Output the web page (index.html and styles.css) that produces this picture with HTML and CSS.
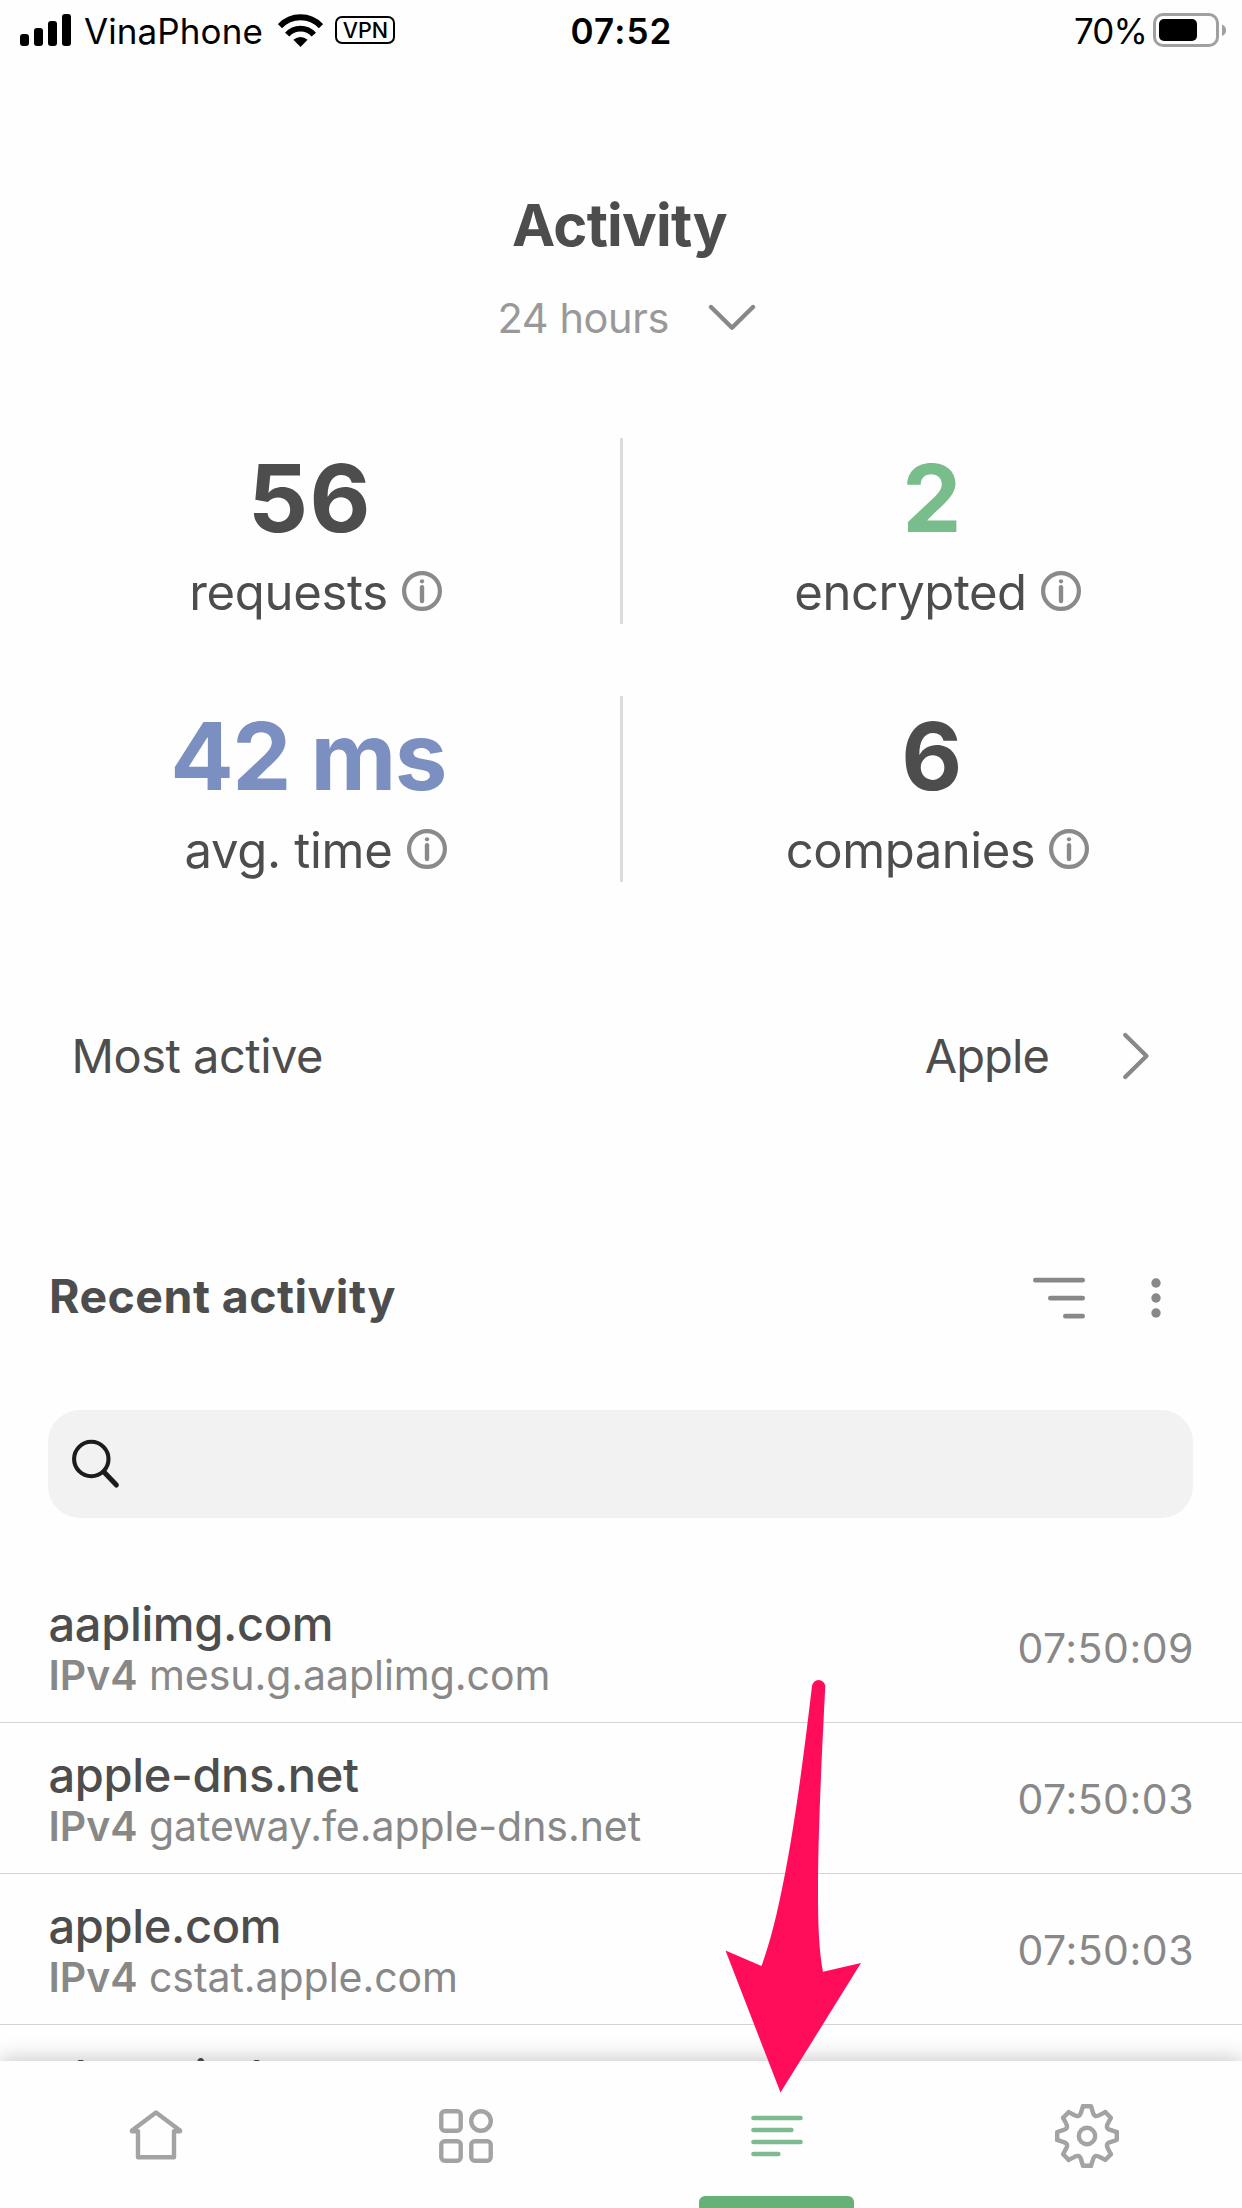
FILE: index.html
```html
<!DOCTYPE html>
<html lang="en">
<head>
<meta charset="utf-8">
<title>Activity</title>
<link rel="stylesheet" href="styles.css">
</head>
<body>
<svg class="defs" width="0" height="0" aria-hidden="true">
  <symbol id="info" viewBox="0 0 40 40">
    <circle cx="20" cy="20" r="17.9" fill="none" stroke="currentColor" stroke-width="4.2"/>
    <circle cx="20" cy="10.3" r="2.1" fill="currentColor"/>
    <path d="M20 16.2V30" stroke="currentColor" stroke-width="4.4" stroke-linecap="round"/>
  </symbol>
  <path id="tooth" d="M-4-29.8H4L5.8-24C6.8-19.8 8.9-18.9 12.9-21.1L18.3-23.9"/>
</svg>
<div class="screen">
  <header class="status">
    <div class="status-left">
      <svg class="signal" width="51" height="32" viewBox="0 0 51 32"><rect y="20" width="9" height="12" rx="3"/><rect x="14" y="14" width="9" height="18" rx="3"/><rect x="28" y="7" width="9" height="25" rx="3"/><rect x="42" width="9" height="32" rx="3"/></svg>
      <span class="carrier">VinaPhone</span>
      <svg class="wifi" width="45" height="33" viewBox="0 0 45 33"><path d="M2 12.2A28 28 0 0 1 43 12.2M9.2 20.6A17.6 17.6 0 0 1 35.8 20.6" fill="none" stroke="#000" stroke-width="5.8"/><path d="M15.4 25.8Q22.5 20 29.6 25.8L22.5 33Z"/></svg>
      <span class="vpn">VPN</span>
    </div>
    <div class="clock">07:52</div>
    <div class="status-right">
      <span class="percent">70%</span>
      <svg class="battery" width="74" height="34" viewBox="0 0 74 34"><rect x="1.5" y="1.5" width="63" height="31" rx="8.5" fill="none" stroke="#a0a0a0" stroke-width="3"/><rect x="6" y="6" width="38" height="22" rx="5"/><path d="M69 11.5Q73 13 73 17.2T69 23Z" fill="#a0a0a0"/></svg>
    </div>
  </header>

  <main class="content">
    <h1>Activity</h1>
    <div class="range"><span>24 hours</span>
      <svg width="48" height="28" viewBox="0 0 48 28"><path d="M3 3L24 23.7L45 3" fill="none" stroke="#888" stroke-width="4.4" stroke-linecap="round" stroke-linejoin="round"/></svg>
    </div>

    <section class="stats">
      <div class="stat"><div class="value tight">56</div><div class="label"><span>requests</span><svg class="info"><use href="#info"/></svg></div></div>
      <div class="divider"></div>
      <div class="stat"><div class="value green">2</div><div class="label wide"><span>encrypted</span><svg class="info"><use href="#info"/></svg></div></div>
      <div class="stat"><div class="value blue">42 ms</div><div class="label"><span>avg. time</span><svg class="info"><use href="#info"/></svg></div></div>
      <div class="divider"></div>
      <div class="stat"><div class="value">6</div><div class="label wide"><span>companies</span><svg class="info"><use href="#info"/></svg></div></div>
    </section>

    <div class="most">
      <span class="most-label">Most active</span><span class="most-value">Apple</span>
      <svg width="28" height="48" viewBox="0 0 28 48"><path d="M3.2 3L24.5 24L3.2 45" fill="none" stroke="#888" stroke-width="4.2" stroke-linecap="round" stroke-linejoin="round"/></svg>
    </div>

    <div class="recent">
      <h2>Recent activity</h2>
      <svg class="sort" width="52" height="42" viewBox="0 0 52 42"><path d="M2.4 3.2H49.6M17.4 21.2H49.6M32.4 39.2H49.6" stroke="#888" stroke-width="4.8" stroke-linecap="round"/></svg>
      <svg class="more" width="10" height="40" viewBox="0 0 10 40" fill="#888"><circle cx="5" cy="5" r="4.7"/><circle cx="5" cy="20" r="4.7"/><circle cx="5" cy="35" r="4.7"/></svg>
    </div>

    <div class="search">
      <svg width="50" height="52" viewBox="0 0 50 52"><circle cx="20.3" cy="22" r="17.2" fill="none" stroke="#1c1c1c" stroke-width="4.1"/><path d="M33 35L45.4 48" stroke="#1c1c1c" stroke-width="5" stroke-linecap="round"/></svg>
    </div>

    <ul class="list">
      <li><div><div class="domain">aaplimg.com</div><div class="host"><b>IPv4</b> <span>mesu.g.aaplimg.com</span></div></div><time>07:50:09</time></li>
      <li><div><div class="domain">apple-dns.net</div><div class="host"><b>IPv4</b> <span>gateway.fe.apple-dns.net</span></div></div><time>07:50:03</time></li>
      <li><div><div class="domain">apple.com</div><div class="host"><b>IPv4</b> <span>cstat.apple.com</span></div></div><time>07:50:03</time></li>
      <li><div><div class="domain">akamaiedge.net</div></div></li>
    </ul>
  </main>

  <nav class="tabs">
    <a class="tab nudge"><svg width="64" height="64" viewBox="-32 -32 64 64"><path d="M0-23.4L24-5.5V-4.8H18V21.2H-18V-4.8H-24V-5.5Z"/></svg></a>
    <a class="tab"><svg width="64" height="64" viewBox="-32 -32 64 64"><rect x="-24.7" y="-24.7" width="19.4" height="19.4" rx="3.5"/><circle cx="15" cy="-15" r="9.8"/><rect x="-24.7" y="5.3" width="19.4" height="19.4" rx="3.5"/><rect x="5.3" y="5.3" width="19.4" height="19.4" rx="3.5"/></svg></a>
    <a class="tab nudge active"><svg width="64" height="64" viewBox="-32 -32 64 64"><path d="M-23.6-18H23.6M-23.6-6H14.4M-23.6 6H23.6M-23.6 18H1.4"/></svg></a>
    <a class="tab"><svg width="68" height="68" viewBox="-34 -34 68 68"><use href="#tooth"/><use href="#tooth" transform="rotate(45)"/><use href="#tooth" transform="rotate(90)"/><use href="#tooth" transform="rotate(135)"/><use href="#tooth" transform="rotate(180)"/><use href="#tooth" transform="rotate(225)"/><use href="#tooth" transform="rotate(270)"/><use href="#tooth" transform="rotate(315)"/><circle r="8.2"/></svg></a>
  </nav>

  <svg class="arrow" width="140" height="418" viewBox="0 0 140 418"><path d="M60.5 413.5L5.5 271.5L41.5 287C66 222 82 91 92 7A6.7 6.7 0 0 1 105.3 7C102 72 98 152 98 212C98 247 99 272 103 292.7L141 284Z" fill="#ff0d5a"/></svg>
</div>
</body>
</html>
```
FILE: styles.css
```css
* { box-sizing: border-box; }

body {
  margin: 0;
  background: #fefefe;
  font-family: Inter, "Liberation Sans", sans-serif;
  color: #4d4d4d;
}

.defs { position: absolute; }

.screen {
  position: relative;
  display: flex;
  flex-direction: column;
  width: 1242px;
  height: 2208px;
  overflow: hidden;
}

svg { display: block; flex: none; }

/* Status bar */
.status {
  display: grid;
  grid-template-columns: 1fr auto 1fr;
  height: 62px;
  padding: 0 15px 0 20px;
  color: #000;
  font-size: 35px;
  line-height: 62px;
}
.status-left, .status-right { display: flex; align-items: center; }
.status-right { justify-content: flex-end; }
.signal { margin-top: -2px; }
.carrier { margin-left: 13px; letter-spacing: .1px; }
.wifi { margin: -2px 0 0 15px; }
.vpn {
  width: 60px;
  height: 28px;
  margin: -2px 0 0 12.5px;
  border: 2.4px solid #000;
  border-radius: 7px;
  font-size: 21.5px;
  font-weight: 500;
  line-height: 24px;
  text-align: center;
}
.clock { font-weight: 600; letter-spacing: 1.1px; transform: translateX(-2px); }
.percent { letter-spacing: -.9px; margin-right: 6px; }
.battery { margin-top: -2px; }

/* Header */
.content {
  display: flex;
  flex: 1;
  flex-direction: column;
  min-height: 0;
  padding-top: 128px;
}
h1 {
  margin: 0;
  padding-right: 3px;
  font-size: 58px;
  font-weight: 700;
  line-height: 70px;
  letter-spacing: -.77px;
  text-align: center;
}
.range {
  display: flex;
  align-items: center;
  justify-content: center;
  gap: 39px;
  margin-top: 33px;
  padding-left: 11.5px;
  color: #999;
  font-size: 41.5px;
  line-height: 50px;
  letter-spacing: -.4px;
}

/* Statistics */
.stats {
  display: grid;
  grid-template-columns: 620px 3px 616px;
  grid-auto-rows: 186px;
  row-gap: 72px;
  margin-top: 95px;
}
.divider { background: #dcdcdc; }
.stat { padding-top: 10px; text-align: center; }
.value {
  font-size: 94px;
  font-weight: 700;
  line-height: 100px;
  letter-spacing: -1.6px;
}
.value.tight { letter-spacing: 1.5px; }
.green { color: #79bd8d; }
.blue { padding-right: 4px; color: #7b8fc0; }
.label {
  display: flex;
  align-items: center;
  justify-content: center;
  gap: 14px;
  margin-top: 15px;
  padding-left: 11px;
  font-size: 49px;
  line-height: 60px;
  letter-spacing: -.3px;
}
.label.wide { padding-left: 13px; letter-spacing: -.45px; }
.info { width: 40px; height: 40px; margin-top: -4px; color: #8a8a8a; }

.most {
  display: flex;
  align-items: center;
  margin-top: 144px;
  padding: 0 92px 0 71.5px;
  font-size: 47px;
  line-height: 60px;
}
.most-label { flex: 1; letter-spacing: -.5px; }
.most-value { margin-right: 73px; letter-spacing: -.9px; }

/* Recent activity */
.recent {
  display: flex;
  align-items: center;
  margin-top: 180px;
  padding: 0 80.6px 0 49px;
}
h2 {
  flex: 1;
  margin: 0;
  font-size: 46.5px;
  font-weight: 700;
  line-height: 60px;
  letter-spacing: .44px;
}
.sort { margin: 3px 66.4px 0 0; }
.more { margin-top: 3px; }

.search {
  display: flex;
  flex: none;
  align-items: center;
  height: 108px;
  margin: 84px 49px 0 48px;
  padding: 0 0 3px 23px;
  border-radius: 32px;
  background: #f2f2f2;
}

.list {
  flex: 1;
  min-height: 0;
  margin: 54px 0 0;
  padding: 0;
  list-style: none;
  overflow: hidden;
}
li {
  display: flex;
  align-items: center;
  justify-content: space-between;
  height: 151px;
  padding: 4px 48px 0 48.5px;
  border-bottom: 1px solid #d4d4d4;
}
li:last-child { align-items: flex-start; padding-top: 27px; }
.domain {
  font-size: 47px;
  font-weight: 500;
  line-height: 50px;
  letter-spacing: -.35px;
}
.host {
  margin-top: 1px;
  color: #888;
  font-size: 41px;
  line-height: 50px;
  letter-spacing: -.05px;
}
.host b { font-weight: 600; }
time {
  padding-bottom: 2px;
  color: #888;
  font-size: 41px;
  letter-spacing: .5px;
}

/* Tab bar */
.tabs {
  position: relative;
  display: grid;
  flex: none;
  grid-template-columns: repeat(4, 1fr);
  height: 147.5px;
  background: #fefefe;
  box-shadow: 0 -2px 20px rgba(0, 0, 0, .22);
}
.tab {
  position: relative;
  display: flex;
  align-items: center;
  justify-content: center;
  padding-top: 4px;
}
.tab.nudge { padding-left: 2px; }
.tab svg {
  fill: none;
  stroke: #a3a3a3;
  stroke-width: 4.4;
  stroke-linecap: round;
  stroke-linejoin: round;
}
.tab.active svg { stroke: #7dba8f; }
.tab.active::after {
  content: "";
  position: absolute;
  bottom: 0;
  left: 78px;
  width: 155px;
  height: 12px;
  border-radius: 6px 6px 0 0;
  background: #66b178;
}

.arrow { position: absolute; left: 720px; top: 1679px; overflow: visible; }
```
